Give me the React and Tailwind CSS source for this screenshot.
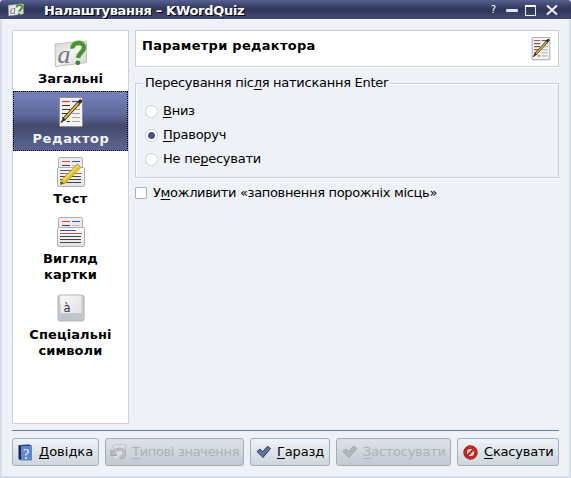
import React from 'react';

function Key({ children }) {
  return <span className="underline decoration-1 underline-offset-[2px] [text-decoration-skip-ink:none]">{children}</span>;
}

function WordIcon({ className }) {
  return (
    <svg viewBox="0 0 34 30" className={className}>
      <defs>
        <linearGradient id="card" x1="0" y1="0" x2="1" y2="1">
          <stop offset="0" stopColor="#d4d4d4" />
          <stop offset=".5" stopColor="#f3f3f3" />
          <stop offset="1" stopColor="#d2d2d2" />
        </linearGradient>
      </defs>
      <path d="M1 5 L32.500 2 V23.500 L1.500 27.500 Z" fill="url(#card)" stroke="#c2c2c2" />
      <text x="3.500" y="23.500" fontSize="26" fontWeight="400" fontStyle="italic" fontFamily="Liberation Serif, serif" fill="#74787d">a</text>
      <path d="M18.500 9.500 C18 2.500 30 2 30 8.500 C30 13.500 24.500 13.500 24 19" fill="none" stroke="#9cc98a" strokeWidth="5.200" />
      <path d="M18.500 9.500 C18 2.500 30 2 30 8.500 C30 13.500 24.500 13.500 24 19" fill="none" stroke="#4a932e" strokeWidth="3.900" />
      <circle cx="23.800" cy="23.800" r="2.400" fill="#3f8428" />
    </svg>
  );
}

function EditorIcon({ className }) {
  return (
    <svg viewBox="0 0 26 31" className={className}>
      <rect x="1.500" y=".5" width="23" height="29" rx="1" fill="#f3f3f3" stroke="#8f8f8f" />
      <path d="M4 4.500h8" stroke="#e0413c" strokeWidth="1.300" />
      <path d="M14 4.500h8" stroke="#3f53c4" strokeWidth="1.300" />
      <path d="M4 8.500h8M4 12.500h8M4 16.500h8M4 20.500h5M9 24.500h3" stroke="#333" strokeWidth="1.200" />
      <path d="M18 8.500h4M14 12.500h8M14 16.500h8M14 20.500h8M14 24.500h8" stroke="#a6a6a6" strokeWidth="1.200" />
      <path d="M3.500 25 L7 21" stroke="#222" strokeWidth="1.600" strokeLinecap="round" />
      <path d="M6 22.200 L22.500 4" stroke="#332b18" strokeWidth="3.400" strokeLinecap="round" />
      <path d="M6.500 21.600 L20.500 6.200" stroke="#e6be36" strokeWidth="1.800" />
    </svg>
  );
}

function CardsIcon({ pencil, className }) {
  return (
    <svg viewBox="0 0 30 32" className={className}>
      <defs>
        <linearGradient id="sheet" x1="0" y1="0" x2="0" y2="1">
          <stop offset="0" stopColor="#fff" />
          <stop offset="1" stopColor="#e2e2e2" />
        </linearGradient>
      </defs>
      <rect x="2.500" y=".5" width="24" height="14" rx="1" fill="#ececec" stroke="#adadad" />
      <path d="M6 4.500h8" stroke="#dc4942" />
      <path d="M16 4.500h8" stroke="#4052bb" />
      <path d="M6 8.500h8" stroke="#444" />
      <path d="M16 8.500h8" stroke="#bbb" />
      <rect x="1.500" y="10.500" width="27" height="19" rx="1.500" fill="url(#sheet)" stroke="#b0b0b0" />
      <path d="M4 13.500h16" stroke="#4052bb" />
      <path d="M4 16.500h22" stroke="#d54c49" />
      <path d="M4 19.500h21M4 22.500h21M4 25.500h21" stroke="#444" />
      {pencil && (
        <g>
          <path d="M4.500 27.500 L6 22.500 L21.500 7 L25 10.500 L9.500 26 Z" fill="#e6c52b" stroke="#b48c18" strokeWidth=".8" />
          <path d="M7.500 23 L22.500 8.300" stroke="#f5e078" strokeWidth="1.100" />
          <path d="M4.500 27.500 L5.500 24.500 L8 26.400 Z" fill="#555" />
        </g>
      )}
    </svg>
  );
}

function KeyIcon({ className }) {
  return (
    <svg viewBox="0 0 28 28" className={className}>
      <defs>
        <linearGradient id="keyTop" x1="0" y1="0" x2="1" y2="1">
          <stop offset="0" stopColor="#fafafa" />
          <stop offset="1" stopColor="#dedfe1" />
        </linearGradient>
      </defs>
      <rect x="1" y="1" width="26" height="26" rx="2.500" fill="#c9cdd2" stroke="#a9adb2" />
      <path d="M3 1.500 H24.500 V19 H4 Z" fill="url(#keyTop)" />
      <path d="M4 19.500H24L26 26H2Z" fill="#c0c5cc" />
      <text x="6.500" y="17.500" fontSize="11.500" fontWeight="400" fontFamily="DejaVu Sans, sans-serif" fill="#30343b">à</text>
    </svg>
  );
}

function CheckIcon({ disabled }) {
  return (
    <svg viewBox="0 0 16 14" className="h-[14px] w-4 shrink-0">
      <path
        d="M1 6.500 L4 4 L6.500 6.800 L11.500 1.300 L14.500 3.500 L7 12.500 Z"
        fill={disabled ? '#b4b7bb' : '#60749f'}
        stroke={disabled ? '#9da1a6' : '#303b61'}
        strokeLinejoin="round"
      />
    </svg>
  );
}

function BookIcon() {
  return (
    <svg viewBox="0 0 15 17" className="h-[17px] w-[15px] shrink-0">
      <path d="M.5 1 L3.500 2 V16.500 L.5 15 Z" fill="#15275a" />
      <path d="M.5 1 L11 .5 L14 2 H3.500Z" fill="#26397a" />
      <rect x="3.500" y="2" width="10.500" height="14.500" fill="#5b87d3" />
      <text x="5" y="14.500" fontSize="14" fontFamily="Liberation Serif, serif" fill="#fff">?</text>
    </svg>
  );
}

function UndoIcon() {
  return (
    <svg viewBox="0 0 17 16" className="h-4 w-[17px] shrink-0">
      <rect x="3.500" y=".5" width="12" height="14" rx="1" fill="#dcdfe2" stroke="#c3c7cb" />
      <path d="M4 8 C7 3.500 15 5 14.500 9.500 C14.300 12 12.500 13.500 9.500 13.500" fill="none" stroke="#a5a9ae" strokeWidth="3.200" />
      <path d="M4 8 C7 3.500 15 5 14.500 9.500 C14.300 12 12.500 13.500 9.500 13.500" fill="none" stroke="#c2c5c9" strokeWidth="1.600" />
      <path d="M1 5.500 V11.500 H7 Z" fill="#b9bcc0" stroke="#a5a9ae" />
    </svg>
  );
}

function CancelIcon() {
  return (
    <svg viewBox="0 0 15 15" className="h-[15px] w-[15px] shrink-0">
      <circle cx="7.500" cy="7.500" r="5.500" fill="#ecdcda" stroke="#8f1712" strokeWidth="3.400" />
      <circle cx="7.500" cy="7.500" r="5.400" fill="none" stroke="#c92c24" strokeWidth="2.200" />
      <path d="M4 11 L11 4" stroke="#c0271f" strokeWidth="2.300" />
    </svg>
  );
}

function NavItem({ icon, children, selected, className }) {
  return (
    <div
      className={`flex flex-col items-center text-center font-bold leading-4 ${
        selected
          ? 'border border-dotted border-black bg-[linear-gradient(#7582bd,#5d689a_40%,#444a6c_58%,#5c6592)] text-[#f1f3f8] '
          : 'border border-transparent text-black '
      }${className}`}
    >
      {icon}
      <span>{children}</span>
    </div>
  );
}

function Button({ icon, children, disabled, className }) {
  return (
    <div
      className={`flex h-7 items-center whitespace-nowrap rounded-[3px] border ${
        disabled
          ? 'border-[#a4acb6] bg-linear-to-b from-[#dde2e8] to-[#c2c9d1] text-[#acb2ba] '
          : 'border-[#a0b0ca] bg-linear-to-b from-[#f0f3f7] to-[#ced5dd] text-black '
      }${className}`}
    >
      {icon}
      <span>{children}</span>
    </div>
  );
}

function Radio({ checked, children }) {
  return (
    <div className="flex h-6 items-center">
      <span className="mr-[5px] flex h-[13px] w-[13px] items-center justify-center rounded-full border border-[#c5d0dc] bg-white">
        {checked && <span className="h-[7px] w-[7px] rounded-full bg-[#4a5380]" />}
      </span>
      <span className="tracking-[-0.25px]">{children}</span>
    </div>
  );
}

export default function App() {
  return (
    <div className="flex h-[478px] w-[571px] flex-col overflow-hidden bg-[#eef1f6] font-['DejaVu_Sans',sans-serif] text-[13px] leading-4 text-black">
      <header className="flex h-[19px] shrink-0 items-center rounded-t-[3px] bg-[linear-gradient(#59628f,#454d78_20%,#2f3557_50%,#414771_90%,#3b416a)] pl-2 text-white">
        <WordIcon className="h-[14px] w-4" />
        <span className="ml-5 flex-1 whitespace-nowrap pt-[2px] font-bold tracking-[-0.3px] [text-shadow:1px_1px_0_#000]">Налаштування – KWordQuiz</span>
        <span className="mr-[9px] text-[10px]">?</span>
        <svg viewBox="0 0 54 14" className="mr-[12px] h-[14px] w-[54px]">
          <rect x="1" y="6" width="12" height="3" rx="1" fill="#e2e5e3" />
          <rect x="20.500" y="3.500" width="10" height="9" fill="none" stroke="#eef0f4" />
          <path d="M20 3h11" stroke="#fff" strokeWidth="2" />
          <path d="M42 2.500 L52 11.500 M52 2.500 L42 11.500" stroke="#eceee9" strokeWidth="2.200" />
        </svg>
      </header>

      <div className="flex flex-1 flex-col border-x-2 border-b-2 border-[#d5dee8] border-t border-t-white px-[10px] pt-[10px]">
        <main className="flex h-[394px] gap-[6px]">
          <nav className="w-[117px] shrink-0 rounded-[1px] border border-[#c8d3df] bg-white">
            <NavItem className="h-[60px] pt-[7px]" icon={<WordIcon className="mb-[2px] h-[30px] w-[34px]" />}>Загальні</NavItem>
            <NavItem selected className="h-[60px] pl-[1px] pt-[5px] tracking-[0.6px]" icon={<EditorIcon className="mb-[3px] h-[31px] w-[26px]" />}>Редактор</NavItem>
            <NavItem className="h-[60px] pt-[5px] tracking-[0.4px]" icon={<CardsIcon pencil className="mb-[2px] h-8 w-[30px]" />}>Тест</NavItem>
            <NavItem className="h-[76px] pt-[5px] tracking-[0.1px]" icon={<CardsIcon className="mb-[2px] h-8 w-[30px]" />}>
              Вигляд<br />картки
            </NavItem>
            <NavItem className="h-[76px] pt-[6px] tracking-[0.1px]" icon={<KeyIcon className="mb-[5px] h-7 w-7" />}>
              Спеціальні<br />символи
            </NavItem>
          </nav>

          <section className="flex w-[424px] flex-col">
            <div className="flex h-[37px] justify-between border border-[#c5d0de] bg-white pl-[6px] pr-[7px] pt-[6px] shadow-[0_1px_0_white]">
              <h1 className="mt-[1px] font-bold tracking-[0.27px]">Параметри редактора</h1>
              <EditorIcon className="h-[24px] w-[20px]" />
            </div>
            <fieldset className="mt-2 h-[103px] border border-[#c5d0de] pl-[9px] shadow-[0_1px_0_white,inset_1px_1px_0_white]">
              <legend className="-ml-[2px] bg-[#eef1f6] px-[2px] leading-4 tracking-[-0.27px]">
                Пересування піс<Key>л</Key>я натискання Enter
              </legend>
              <div className="pt-[8px]">
                <Radio><Key>В</Key>низ</Radio>
                <Radio checked><Key>П</Key>раворуч</Radio>
                <Radio>Не пе<Key>р</Key>есувати</Radio>
              </div>
            </fieldset>
            <div className="mt-[7px] flex items-center">
              <span className="mr-[6px] h-3 w-3 rounded-[1px] border border-[#9fb3d2] bg-white" />
              <span className="tracking-[-0.32px]">У<Key>м</Key>ожливити «заповнення порожніх місць»</span>
            </div>
          </section>
        </main>

        <footer className="mt-[6px] border-t border-[#617b9c] pt-[7px]">
          <div className="flex gap-[6px]">
            <Button className="w-[87px] pl-[5px]" icon={<span className="mr-[6px]"><BookIcon /></span>}><Key>Д</Key>овідка</Button>
            <Button disabled className="w-[139px] pl-[4px] tracking-[-0.33px]" icon={<span className="mr-[5px]"><UndoIcon /></span>}><Key>Т</Key>ипові значення</Button>
            <Button className="w-[80px] pl-[5px] tracking-[-0.15px]" icon={<span className="mr-[5px]"><CheckIcon /></span>}><Key>Г</Key>аразд</Button>
            <Button disabled className="w-[115px] pl-[5px] tracking-[-0.25px]" icon={<span className="mr-[5px]"><CheckIcon disabled /></span>}><Key>З</Key>астосувати</Button>
            <Button className="w-[102px] pl-[5px] tracking-[-0.2px]" icon={<span className="mr-[6px]"><CancelIcon /></span>}><Key>С</Key>касувати</Button>
          </div>
        </footer>
      </div>
    </div>
  );
}
